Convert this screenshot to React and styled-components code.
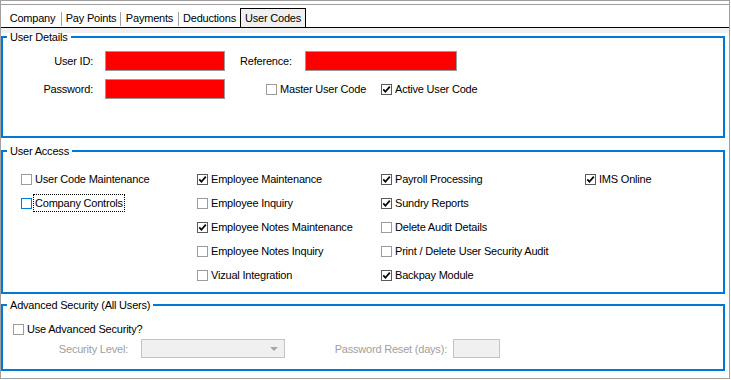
import React from 'react';
import styled, { createGlobalStyle } from 'styled-components';

const Global = createGlobalStyle`
  html, body { margin: 0; padding: 0; background: #fff; }
  body {
    font-family: "Liberation Sans", Arial, sans-serif;
    font-size: 11px;
    line-height: 14px;
    letter-spacing: -0.2px;
    color: #000;
  }
`;

const Frame = styled.div`
  box-sizing: border-box;
  width: 730px;
  height: 379px;
  border: 1px solid #a0a0a0;
  display: flex;
  flex-direction: column;
`;

const TabStrip = styled.div`
  box-sizing: border-box;
  height: 24px;
  margin-top: 3px;
  border-top: 1px solid #a0a0a0;
  border-bottom: 1px solid #000;
  display: flex;
  align-items: flex-end;
  padding-left: 3px;
  flex: none;
`;

const Tab = styled.div`
  box-sizing: border-box;
  width: ${p => p.$w}px;
  height: 19px;
  display: flex;
  align-items: center;
  justify-content: center;
  white-space: nowrap;
  border: 1px solid ${p => (p.$active ? '#000' : 'transparent')};
  border-bottom: none;
  background: ${p => (p.$active ? '#f0f0f0' : 'transparent')};
  padding-bottom: 1px;
`;

const TabSep = styled.span`
  width: 1px;
  height: 14px;
  margin-bottom: 1px;
  background: #a0a0a0;
  flex: none;
`;

const Body = styled.div`
  flex: 1;
  padding: 2px 4px 0 0;
  background: linear-gradient(#f0f0f0 0 5px, #fff 5px);
  display: flex;
  flex-direction: column;
`;

const Group = styled.fieldset`
  box-sizing: border-box;
  margin: ${p => p.$mt}px 0 0 0;
  padding: 0;
  min-width: 0;
  width: 724px;
  height: ${p => p.$h}px;
  border: 2px solid #0078d7;
  flex: none;
`;

const Legend = styled.legend`
  margin-left: 4px;
  padding: 0 3px;
  line-height: 14px;
`;

const DetailsBody = styled.div`
  padding-top: 7px;
  display: flex;
  flex-direction: column;
  gap: 8px;
`;

const FormRow = styled.div`
  display: flex;
  align-items: center;
  height: ${p => p.$h || 20}px;
`;

const FieldLabel = styled.label`
  flex: none;
  width: ${p => p.$w}px;
  margin-left: ${p => p.$ml || 0}px;
  margin-right: ${p => p.$mr || 0}px;
  text-align: ${p => p.$align || 'left'};
  white-space: nowrap;
  color: ${p => (p.$disabled ? '#a0a0a0' : '#000')};
`;

const RedInput = styled.input`
  box-sizing: border-box;
  flex: none;
  width: ${p => p.$w}px;
  height: 20px;
  margin: 0;
  padding: 0;
  background: #ff0000;
  border: 1px solid #9a9a9a;
  outline: none;
`;

const DisabledBox = styled.div`
  box-sizing: border-box;
  flex: none;
  width: ${p => p.$w}px;
  height: 19px;
  background: #f0f0f0;
  border: 1px solid #c4c4c4;
  display: flex;
  align-items: center;
  justify-content: flex-end;
  padding-right: 6px;
`;

const Arrow = styled.span`
  width: 0;
  height: 0;
  border-left: 4px solid transparent;
  border-right: 4px solid transparent;
  border-top: 4px solid #a6a6a6;
`;

const CheckRow = styled.div`
  box-sizing: border-box;
  display: flex;
  align-items: center;
  height: ${p => p.$h || 24}px;
  width: ${p => (p.$w ? `${p.$w}px` : 'auto')};
  margin-left: ${p => p.$ml || 0}px;
  flex: none;
  white-space: nowrap;
`;

const Box = styled.span`
  box-sizing: border-box;
  flex: none;
  width: 11px;
  height: 11px;
  margin-right: 3px;
  background: #fff;
  border: 1px solid ${p => (p.$focus ? '#0078d7' : p.$checked ? '#5a5a5a' : '#9c9c9c')};
  display: flex;
  align-items: center;
  justify-content: center;
`;

const CheckText = styled.span`
  outline: ${p => (p.$focus ? '1px dotted #000' : 'none')};
  outline-offset: 1px;
`;

const AccessBody = styled.div`
  padding: 9px 0 0 18px;
  display: flex;
`;

const AccessColumn = styled.div`
  flex: none;
  width: ${p => p.$w}px;
  display: flex;
  flex-direction: column;
`;

const AdvancedBody = styled.div`
  padding: 8px 0 0 10px;
  display: flex;
  flex-direction: column;
  gap: 1px;
`;

function Check({ label, checked, focus, w, ml, h }) {
  return (
    <CheckRow $w={w} $ml={ml} $h={h}>
      <Box $checked={checked} $focus={focus}>
        {checked && (
          <svg width="9" height="9" viewBox="0 0 9 9">
            <path d="M1.3 4.4 L3.4 6.8 L7.8 1.6" fill="none" stroke="#000" strokeWidth="1.7" />
          </svg>
        )}
      </Box>
      <CheckText $focus={focus}>{label}</CheckText>
    </CheckRow>
  );
}

const tabs = [
  { label: 'Company', w: 57 },
  { label: 'Pay Points', w: 58 },
  { label: 'Payments', w: 57 },
  { label: 'Deductions', w: 61 },
];

const columns = [
  {
    w: 176,
    items: [
      { label: 'User Code Maintenance' },
      { label: 'Company Controls', focus: true },
    ],
  },
  {
    w: 184,
    items: [
      { label: 'Employee Maintenance', checked: true },
      { label: 'Employee Inquiry' },
      { label: 'Employee Notes Maintenance', checked: true },
      { label: 'Employee Notes Inquiry' },
      { label: 'Vizual Integration' },
    ],
  },
  {
    w: 204,
    items: [
      { label: 'Payroll Processing', checked: true },
      { label: 'Sundry Reports', checked: true },
      { label: 'Delete Audit Details' },
      { label: 'Print / Delete User Security Audit' },
      { label: 'Backpay Module', checked: true },
    ],
  },
  {
    w: 120,
    items: [{ label: 'IMS Online', checked: true }],
  },
];

export default function App() {
  return (
    <>
      <Global />
      <Frame>
        <TabStrip>
          {tabs.map((t, i) => (
            <React.Fragment key={t.label}>
              <Tab $w={t.w}>{t.label}</Tab>
              {i < tabs.length - 1 && <TabSep />}
            </React.Fragment>
          ))}
          <Tab $w={66} $active>User Codes</Tab>
        </TabStrip>
        <Body>
          <Group $mt={0} $h={108}>
            <Legend>User Details</Legend>
            <DetailsBody>
              <FormRow>
                <FieldLabel $w={90} $mr={12} $align="right">User ID:</FieldLabel>
                <RedInput $w={120} readOnly />
                <FieldLabel $w={53} $ml={15} $mr={12}>Reference:</FieldLabel>
                <RedInput $w={152} readOnly />
              </FormRow>
              <FormRow>
                <FieldLabel $w={90} $mr={12} $align="right">Password:</FieldLabel>
                <RedInput $w={120} readOnly type="password" />
                <Check label="Master User Code" w={115} ml={41} h={20} />
                <Check label="Active User Code" checked h={20} />
              </FormRow>
            </DetailsBody>
          </Group>

          <Group $mt={6} $h={150}>
            <Legend>User Access</Legend>
            <AccessBody>
              {columns.map((c, i) => (
                <AccessColumn key={i} $w={c.w}>
                  {c.items.map(it => (
                    <Check key={it.label} label={it.label} checked={it.checked} focus={it.focus} />
                  ))}
                </AccessColumn>
              ))}
            </AccessBody>
          </Group>

          <Group $mt={4} $h={73}>
            <Legend>Advanced Security (All Users)</Legend>
            <AdvancedBody>
              <Check label="Use Advanced Security?" h={18} />
              <FormRow $h={19}>
                <FieldLabel $w={115} $mr={13} $align="right" $disabled>Security Level:</FieldLabel>
                <DisabledBox $w={144}>
                  <Arrow />
                </DisabledBox>
                <FieldLabel $w={115} $ml={47} $mr={6} $align="right" $disabled>Password Reset (days):</FieldLabel>
                <DisabledBox $w={47} />
              </FormRow>
            </AdvancedBody>
          </Group>
        </Body>
      </Frame>
    </>
  );
}
